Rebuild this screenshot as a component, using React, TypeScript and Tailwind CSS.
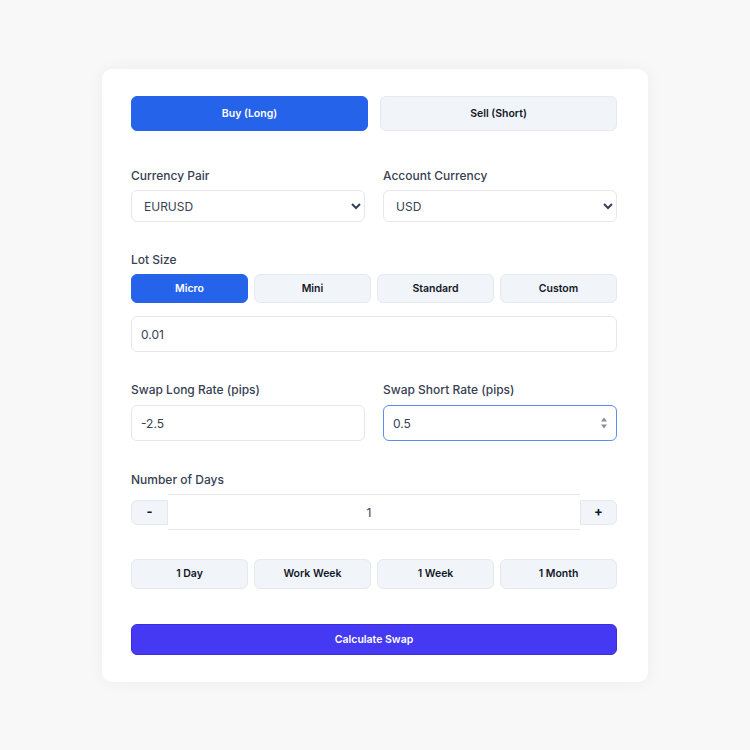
import { useState } from 'react';

const lots = [
  { label: 'Micro', value: '0.01' },
  { label: 'Mini', value: '0.1' },
  { label: 'Standard', value: '1' },
  { label: 'Custom', value: '' },
];

const presets = [
  { label: '1 Day', days: 1 },
  { label: 'Work Week', days: 5 },
  { label: '1 Week', days: 7 },
  { label: '1 Month', days: 30 },
];

export default function App() {
  const [side, setSide] = useState<'long' | 'short'>('long');
  const [lot, setLot] = useState('Micro');
  const [lotValue, setLotValue] = useState('0.01');
  const [swapLong, setSwapLong] = useState('-2.5');
  const [swapShort, setSwapShort] = useState('0.5');
  const [days, setDays] = useState(1);

  const tab = (active: boolean) =>
    active
      ? 'bg-[#2563eb] text-white border border-[#2563eb]'
      : 'bg-[#f1f5f9] text-[#111827] border border-[#e5e9f0]';

  return (
    <div className="min-h-screen bg-[#f8f8f8] flex justify-center pt-[69px] font-['Inter','Liberation_Sans',sans-serif]">
      <div className="w-[546px] h-[613px] bg-white rounded-[10px] shadow-[0_0_18px_rgba(0,0,0,0.05)] pl-[29px] pr-[31px] pt-[27px]">
        <div className="flex gap-3">
          <button
            onClick={() => setSide('long')}
            className={`flex-1 h-[35px] rounded-md text-[10.5px] font-semibold ${tab(side === 'long')}`}
          >
            Buy (Long)
          </button>
          <button
            onClick={() => setSide('short')}
            className={`flex-1 h-[35px] rounded-md text-[10.5px] font-semibold ${tab(side === 'short')}`}
          >
            Sell (Short)
          </button>
        </div>

        <div className="flex gap-[18px] mt-[37px]">
          <div className="flex-1">
            <label className="block text-[12px] text-[#374151] font-medium leading-4 mb-[6px]">Currency Pair</label>
            <select className="w-full h-[32px] border border-[#e5e7eb] rounded-md px-[8px] text-[12px] text-[#374151] bg-white">
              <option>EURUSD</option>
              <option>GBPUSD</option>
              <option>USDJPY</option>
            </select>
          </div>
          <div className="flex-1">
            <label className="block text-[12px] text-[#374151] font-medium leading-4 mb-[6px]">Account Currency</label>
            <select className="w-full h-[32px] border border-[#e5e7eb] rounded-md px-[8px] text-[12px] text-[#374151] bg-white">
              <option>USD</option>
              <option>EUR</option>
              <option>GBP</option>
            </select>
          </div>
        </div>

        <label className="block text-[12px] text-[#374151] font-medium leading-4 mt-[30px] mb-[6px]">Lot Size</label>
        <div className="flex gap-[6px]">
          {lots.map(l => (
            <button
              key={l.label}
              onClick={() => { setLot(l.label); if (l.value) setLotValue(l.value); }}
              className={`flex-1 h-[29px] rounded-md text-[10.5px] font-semibold ${tab(lot === l.label)}`}
            >
              {l.label}
            </button>
          ))}
        </div>
        <input
          value={lotValue}
          onChange={e => setLotValue(e.target.value)}
          className="mt-[13px] w-full h-[36px] border border-[#e5e7eb] rounded-md px-[9px] text-[12px] text-[#374151] outline-none"
        />

        <div className="flex gap-[18px] mt-[30px]">
          <div className="flex-1">
            <label className="block text-[12px] text-[#374151] font-medium leading-4 mb-[7px]">Swap Long Rate (pips)</label>
            <input
              value={swapLong}
              onChange={e => setSwapLong(e.target.value)}
              className="w-full h-[36px] border border-[#e5e7eb] rounded-md px-[9px] text-[12px] text-[#374151] outline-none"
            />
          </div>
          <div className="flex-1">
            <label className="block text-[12px] text-[#374151] font-medium leading-4 mb-[7px]">Swap Short Rate (pips)</label>
            <div className="relative">
              <input
                value={swapShort}
                onChange={e => setSwapShort(e.target.value)}
                className="w-full h-[36px] border-[1.5px] border-[#5b8def] rounded-md px-[9px] text-[12px] text-[#374151] outline-none"
              />
              <div className="absolute right-[10px] top-1/2 -translate-y-1/2 flex flex-col items-center gap-[3px]">
                <span className="w-0 h-0 border-l-[3px] border-r-[3px] border-b-[4px] border-l-transparent border-r-transparent border-b-[#8a8f98]" />
                <span className="w-0 h-0 border-l-[3px] border-r-[3px] border-t-[4px] border-l-transparent border-r-transparent border-t-[#8a8f98]" />
              </div>
            </div>
          </div>
        </div>

        <label className="block text-[12px] text-[#374151] font-medium leading-4 mt-[31px] mb-[6px]">Number of Days</label>
        <div className="flex items-center">
          <button
            onClick={() => setDays(Math.max(1, days - 1))}
            className="w-[37px] h-[25px] bg-[#f1f5f9] border border-[#e5e9f0] rounded-l-md text-[13px] font-bold text-[#111827]"
          >
            -
          </button>
          <input
            value={days}
            onChange={e => setDays(Number(e.target.value) || 1)}
            className="flex-1 h-[36px] border-y border-[#e5e7eb] text-center pr-[10px] text-[12px] text-[#374151] outline-none"
          />
          <button
            onClick={() => setDays(days + 1)}
            className="w-[37px] h-[25px] bg-[#f1f5f9] border border-[#e5e9f0] rounded-r-md text-[13px] font-bold text-[#111827]"
          >
            +
          </button>
        </div>

        <div className="flex gap-[6px] mt-[29px]">
          {presets.map(p => (
            <button
              key={p.label}
              onClick={() => setDays(p.days)}
              className="flex-1 h-[30px] rounded-md text-[10.5px] font-semibold bg-[#f1f5f9] text-[#111827] border border-[#e5e9f0]"
            >
              {p.label}
            </button>
          ))}
        </div>

        <button className="mt-[35px] w-full h-[31px] rounded-md bg-[#4539f4] text-white text-[10.5px] font-semibold border border-[#3a2fe0]">
          Calculate Swap
        </button>
      </div>
    </div>
  );
}
